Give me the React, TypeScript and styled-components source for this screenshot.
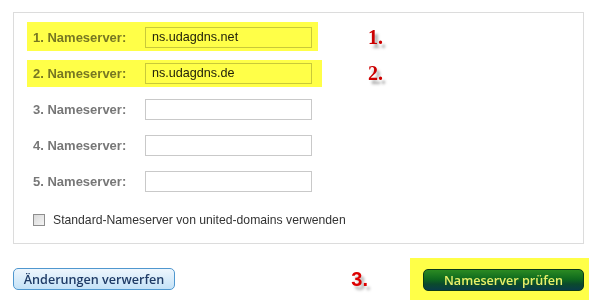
import React from 'react';
import styled, { createGlobalStyle, css } from 'styled-components';

const GlobalStyle = createGlobalStyle`
  body {
    margin: 0;
    background: #fff;
    font-family: "Liberation Sans", Arial, sans-serif;
  }
`;

const Page = styled.div`
  width: 571px;
  padding: 12px 0 0 13px;
`;

const Panel = styled.div`
  box-sizing: border-box;
  height: 232px;
  border: 1px solid #dcdcdc;
  padding: 6px 0 0 19px;
`;

type Mark = { top: number; bottom: number; right: number };

const Row = styled.div<{ $mark?: Mark }>`
  position: relative;
  display: flex;
  align-items: center;
  height: 36px;

  ${({ $mark }) =>
    $mark &&
    css`
      &::before {
        content: '';
        position: absolute;
        left: -6px;
        width: ${291 + $mark.right}px;
        top: ${$mark.top}px;
        bottom: ${$mark.bottom}px;
        background: #ffff48;
        mix-blend-mode: multiply;
        pointer-events: none;
      }
    `}
`;

const Label = styled.label`
  width: 112px;
  font-size: 13px;
  font-weight: bold;
  color: #777;
`;

const Field = styled.input`
  box-sizing: border-box;
  width: 167px;
  height: 21px;
  padding: 0 6px;
  border: 1px solid #c9c9c9;
  background: #fff;
  font-family: "Liberation Sans", Arial, sans-serif;
  font-size: 12.6px;
  color: #222;
  outline: none;
`;

const Annotation = styled.span`
  margin-left: 56px;
  font-family: "Liberation Serif", "Times New Roman", serif;
  font-size: 20px;
  font-weight: bold;
  color: #cc0000;
  text-shadow: 3px 4px 3px rgba(0, 0, 0, 0.35);
`;

const CheckRow = styled.label`
  display: flex;
  align-items: center;
  gap: 8px;
  height: 20px;
  margin-top: 11px;
  font-size: 12.2px;
  color: #333;
`;

const Check = styled.input`
  appearance: none;
  box-sizing: border-box;
  width: 12px;
  height: 12px;
  margin: 0;
  border: 1px solid #8e8e8e;
  background: linear-gradient(135deg, #d9d9d9, #f4f4f4);
`;

const Footer = styled.div`
  display: flex;
  align-items: center;
  justify-content: space-between;
  margin-top: 14px;
`;

const Button = styled.button<{ $primary?: boolean }>`
  box-sizing: border-box;
  height: 22px;
  border-radius: 5px;
  font-family: "Open Sans", sans-serif;
  font-size: 12.6px;
  font-weight: 600;
  cursor: pointer;
  ${({ $primary }) =>
    $primary
      ? css`
          width: 161px;
          border: 1px solid #0b3b1a;
          background: linear-gradient(#2b8a22 0%, #0f6a1e 45%, #0b4a2c 70%, #093c48 100%);
          color: #e9f06a;
        `
      : css`
          width: 162px;
          border: 1px solid #4f97cf;
          background: linear-gradient(#eef6fd, #c4e2f7);
          color: #1f3b66;
        `}
`;

const RightGroup = styled.div`
  display: flex;
  align-items: center;
  gap: 42px;
  margin-right: -5px;
`;

const StepNumber = styled.span`
  font-size: 20px;
  font-weight: bold;
  color: #dd0000;
  text-shadow: 3px 4px 3px rgba(0, 0, 0, 0.3);
`;

const Highlight = styled.div`
  background: #ffff48;
  padding: 11px 5px 9px 13px;
`;

const servers = [
  { value: 'ns.udagdns.net', mark: { top: 3, bottom: 4, right: 0 }, note: '1.' },
  { value: 'ns.udagdns.de', mark: { top: 5, bottom: 4, right: 4 }, note: '2.' },
  { value: '' },
  { value: '' },
  { value: '' },
];

const App = () => (
  <Page>
    <GlobalStyle />
    <Panel>
      {servers.map((server, index) => (
        <Row key={ index } $mark={ server.mark }>
          <Label>{index + 1}. Nameserver:</Label>
          <Field defaultValue={ server.value } />
          {server.note && <Annotation>{server.note}</Annotation>}
        </Row>
      ))}
      <CheckRow>
        <Check type="checkbox" />
        Standard-Nameserver von united-domains verwenden
      </CheckRow>
    </Panel>
    <Footer>
      <Button>Änderungen verwerfen</Button>
      <RightGroup>
        <StepNumber>3.</StepNumber>
        <Highlight>
          <Button $primary>Nameserver prüfen</Button>
        </Highlight>
      </RightGroup>
    </Footer>
  </Page>
);

export default App;
